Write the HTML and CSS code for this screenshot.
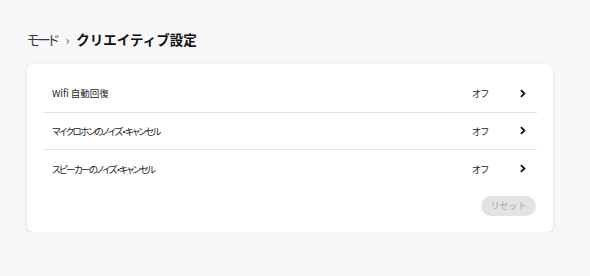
FILE: index.html
```html
<!DOCTYPE html>
<html lang="ja">
<head>
    <meta charset="UTF-8">
    <title>クリエイティブ設定</title>
    <link rel="stylesheet" href="styles.css">
</head>
<body>
    <div class="page">
        <div class="breadcrumb">
            <span class="crumb">モード</span>
            <span class="sep">›</span>
            <span class="crumb current">クリエイティブ設定</span>
        </div>

        <div class="card">
            <div class="row">
                <span class="label">Wifi 自動回復</span>
                <span class="value">オフ</span>
                <svg class="chevron" viewBox="0 0 10 10"><path d="M3.5 2 L6.8 5 L3.5 8" /></svg>
            </div>
            <div class="row">
                <span class="label kana">マイクロホンのノイズ・キャンセル</span>
                <span class="value">オフ</span>
                <svg class="chevron" viewBox="0 0 10 10"><path d="M3.5 2 L6.8 5 L3.5 8" /></svg>
            </div>
            <div class="row">
                <span class="label kana">スピーカーのノイズ・キャンセル</span>
                <span class="value">オフ</span>
                <svg class="chevron" viewBox="0 0 10 10"><path d="M3.5 2 L6.8 5 L3.5 8" /></svg>
            </div>

            <div class="actions">
                <button class="reset-btn" disabled>リセット</button>
            </div>
        </div>
    </div>
</body>
</html>
```

FILE: styles.css
```css
body {
    margin: 0;
    background: #f7f7f9;
    font-family: "Noto Sans CJK JP", "Noto Sans", sans-serif;
    font-feature-settings: "palt";
    color: #222;
}

.page {
    padding: 27px 37px 0 27px;
}

/* Breadcrumb */
.breadcrumb {
    display: flex;
    align-items: center;
    height: 24px;
    font-size: 13.5px;
    margin-bottom: 13px;
}

.crumb {
    color: #3a3a3a;
    letter-spacing: -2.4px;
}

.crumb.current {
    color: #111;
    font-weight: bold;
    letter-spacing: 0;
    font-feature-settings: normal;
}

.sep {
    margin: 0 7px 0 9px;
    font-size: 12px;
    color: #555;
}

/* Card */
.card {
    background: #fff;
    border-radius: 6px;
    box-shadow: 0 1px 3px rgba(0, 0, 0, 0.14);
    padding: 11px 16px 16px 16px;
}

.row {
    display: flex;
    align-items: center;
    box-sizing: border-box;
    height: 37.5px;
    padding: 0 9px;
    font-size: 9.5px;
    border-bottom: 1px solid #e2e2e2;
}

.row:nth-child(3) {
    border-bottom: none;
}

.label {
    flex: 1;
}

.label.kana {
    letter-spacing: -1.6px;
}

.value {
    width: 45px;
}

.chevron {
    width: 11px;
    height: 11px;
}

.chevron path {
    fill: none;
    stroke: #111;
    stroke-width: 1.6;
}

.actions {
    display: flex;
    justify-content: flex-end;
    margin-top: 8px;
}

.reset-btn {
    background: #e3e3e3;
    color: #a8a8a8;
    border: none;
    border-radius: 10px;
    width: 55px;
    height: 20px;
    margin-right: 1px;
    font-family: inherit;
    font-size: 9px;
}
```
